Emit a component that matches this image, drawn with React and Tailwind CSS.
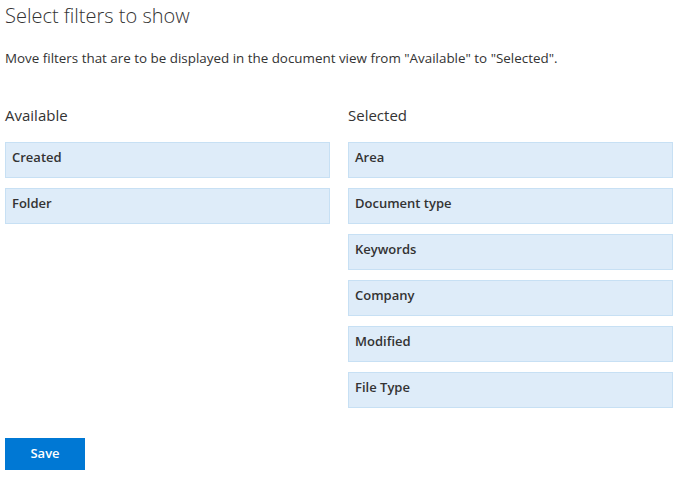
import React from 'react';

const available = ['Created', 'Folder'];
const selected = ['Area', 'Document type', 'Keywords', 'Company', 'Modified', 'File Type'];

const FilterItem = ({ label }) => (
  <div className="h-[36px] border border-[#c7e0f4] bg-[#deecf9] px-[6px] pt-[5px] text-[13px] font-semibold text-[#333333]">
    {label}
  </div>
);

const FilterColumn = ({ title, items }) => (
  <div className="w-[325px]">
    <h2 className="mb-[17px] text-[15px] leading-[20px] text-[#333333]">{title}</h2>
    <div className="flex flex-col gap-[10px]">
      {items.map((item) => (
        <FilterItem key={item} label={item} />
      ))}
    </div>
  </div>
);

export default function App() {
  return (
    <div className="min-h-screen bg-white px-[5px] pt-[2px] font-['Open_Sans',sans-serif] text-[#333333]">
      <h1 className="text-[20px] font-light leading-[28px]">Select filters to show</h1>
      <p className="mt-[19px] text-[13.4px] leading-[18px]">
        Move filters that are to be displayed in the document view from "Available" to "Selected".
      </p>
      <div className="mt-[38px] flex gap-[18px]">
        <FilterColumn title="Available" items={available} />
        <FilterColumn title="Selected" items={selected} />
      </div>
      <button className="mt-[30px] h-[32px] w-[80px] bg-[#0078d4] text-[13px] font-semibold text-white">
        Save
      </button>
    </div>
  );
}
